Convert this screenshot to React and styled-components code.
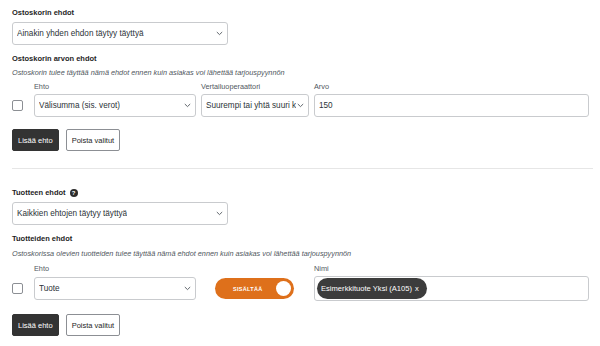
import styled, { createGlobalStyle } from "styled-components";

const Global = createGlobalStyle`
  body {
    margin: 0;
    background: #fff;
    font-family: "Liberation Sans", Arial, sans-serif;
    color: #1e1e1e;
  }
`;

const Page = styled.div`
  padding: 8px 7px 0 12px;
  width: 600px;
  box-sizing: border-box;
`;

const Section = styled.div`
  display: flex;
  flex-direction: column;
`;

const Heading = styled.div`
  font-size: 7.5px;
  font-weight: 700;
  line-height: 10px;
  display: flex;
  align-items: center;
  gap: 4px;
  margin-bottom: ${(p) => p.$mb || 4}px;
`;

const Help = styled.span`
  width: 8px;
  height: 8px;
  border-radius: 50%;
  background: #2c2c2c;
  color: #fff;
  font-size: 6px;
  font-weight: 700;
  display: inline-flex;
  align-items: center;
  justify-content: center;
`;

const Desc = styled.div`
  font-size: 7.3px;
  font-style: italic;
  color: #50575e;
  line-height: 10px;
  margin-bottom: ${(p) => p.$mb || 4}px;
`;

const SelectBox = styled.div`
  box-sizing: border-box;
  width: ${(p) => p.$w}px;
  height: 23px;
  border: 1px solid #c9cbce;
  border-radius: 3px;
  display: flex;
  align-items: center;
  justify-content: space-between;
  padding: 0 4px 0 4px;
  font-size: 8.2px;
  color: #2c3338;
  background: #fff;
  white-space: nowrap;
  overflow: hidden;
  margin-bottom: ${(p) => p.$mb || 0}px;
  span {
    overflow: hidden;
  }
  svg {
    flex: none;
    margin-left: 1px;
  }
`;

const Chevron = () => (
  <svg width="7" height="5" viewBox="0 0 7 5">
    <path d="M0.8 1l2.7 2.6L6.2 1" fill="none" stroke="#50575e" strokeWidth="0.9" />
  </svg>
);

const Select = ({ w, mb, children }) => (
  <SelectBox $w={w} $mb={mb}>
    <span>{children}</span>
    <Chevron />
  </SelectBox>
);

const Grid = styled.div`
  display: grid;
  grid-template-columns: 17px 162px 108px 1fr;
  column-gap: 5px;
  row-gap: 2px;
  align-items: center;
`;

const ColLabel = styled.div`
  font-size: 7.3px;
  color: #50575e;
  line-height: 10px;
`;

const Check = styled.span`
  width: 9px;
  height: 9px;
  border: 1px solid #8c8f94;
  border-radius: 2px;
  background: #fff;
`;

const TextBox = styled.div`
  box-sizing: border-box;
  height: ${(p) => p.$h || 23}px;
  border: 1px solid #c9cbce;
  border-radius: 3px;
  display: flex;
  align-items: center;
  padding: 0 ${(p) => p.$pad ?? 4}px;
  font-size: 8.2px;
  color: #2c3338;
  margin-right: 4px;
`;

const Chip = styled.span`
  background: #3c3c3c;
  color: #fff;
  border-radius: 11px;
  height: 21px;
  padding: 0 8px 0 4px;
  display: inline-flex;
  align-items: center;
  font-size: 7.6px;
  gap: 3px;
`;

const Toggle = styled.div`
  justify-self: start;
  margin-left: 14px;
  width: 79px;
  height: 21px;
  border-radius: 11px;
  background: #de701b;
  display: flex;
  align-items: center;
  justify-content: space-between;
  padding: 0 3px 0 18px;
  box-sizing: border-box;
  color: #fff;
  font-size: 5.5px;
  font-weight: 700;
  letter-spacing: 0.3px;
`;

const Knob = styled.span`
  width: 15px;
  height: 15px;
  border-radius: 50%;
  background: #fff;
`;

const Buttons = styled.div`
  display: flex;
  gap: 7px;
  margin-top: ${(p) => p.$mt}px;
`;

const Button = styled.button`
  font-family: inherit;
  height: 22px;
  box-sizing: border-box;
  padding: 0 5px;
  font-size: 7.5px;
  border-radius: 2px;
  cursor: pointer;
  border: 1px solid ${(p) => (p.$primary ? "#333" : "#8c8f94")};
  background: ${(p) => (p.$primary ? "#333" : "#fff")};
  color: ${(p) => (p.$primary ? "#fff" : "#1e1e1e")};
`;

const Divider = styled.hr`
  border: 0;
  border-top: 1px solid #e6e6e6;
  margin: 17px 0 19px;
`;

export default function App() {
  return (
    <Page>
      <Global />
      <Section>
        <Heading $mb={4}>Ostoskorin ehdot</Heading>
        <Select w={216} mb={9}>Ainakin yhden ehdon täytyy täyttyä</Select>
        <Heading $mb={4}>Ostoskorin arvon ehdot</Heading>
        <Desc>Ostoskorin tulee täyttää nämä ehdot ennen kuin asiakas voi lähettää tarjouspyynnön</Desc>
        <Grid>
          <span />
          <ColLabel>Ehto</ColLabel>
          <ColLabel>Vertailuoperaattori</ColLabel>
          <ColLabel>Arvo</ColLabel>
          <Check />
          <Select w={162}>Välisumma (sis. verot)</Select>
          <Select w={108}>Suurempi tai yhtä suuri kuin</Select>
          <TextBox>150</TextBox>
        </Grid>
        <Buttons $mt={12}>
          <Button $primary>Lisää ehto</Button>
          <Button>Poista valitut</Button>
        </Buttons>
      </Section>
      <Divider />
      <Section>
        <Heading $mb={4}>
          Tuotteen ehdot <Help>?</Help>
        </Heading>
        <Select w={216} mb={9}>Kaikkien ehtojen täytyy täyttyä</Select>
        <Heading $mb={5}>Tuotteiden ehdot</Heading>
        <Desc $mb={5}>Ostoskorissa olevien tuotteiden tulee täyttää nämä ehdot ennen kuin asiakas voi lähettää tarjouspyynnön</Desc>
        <Grid>
          <span />
          <ColLabel>Ehto</ColLabel>
          <span />
          <ColLabel>Nimi</ColLabel>
          <Check />
          <Select w={162}>Tuote</Select>
          <Toggle>
            SISÄLTÄÄ
            <Knob />
          </Toggle>
          <TextBox $h={25} $pad={2}>
            <Chip>
              Esimerkkituote Yksi (A105) <span>x</span>
            </Chip>
          </TextBox>
        </Grid>
        <Buttons $mt={13}>
          <Button $primary>Lisää ehto</Button>
          <Button>Poista valitut</Button>
        </Buttons>
      </Section>
    </Page>
  );
}
